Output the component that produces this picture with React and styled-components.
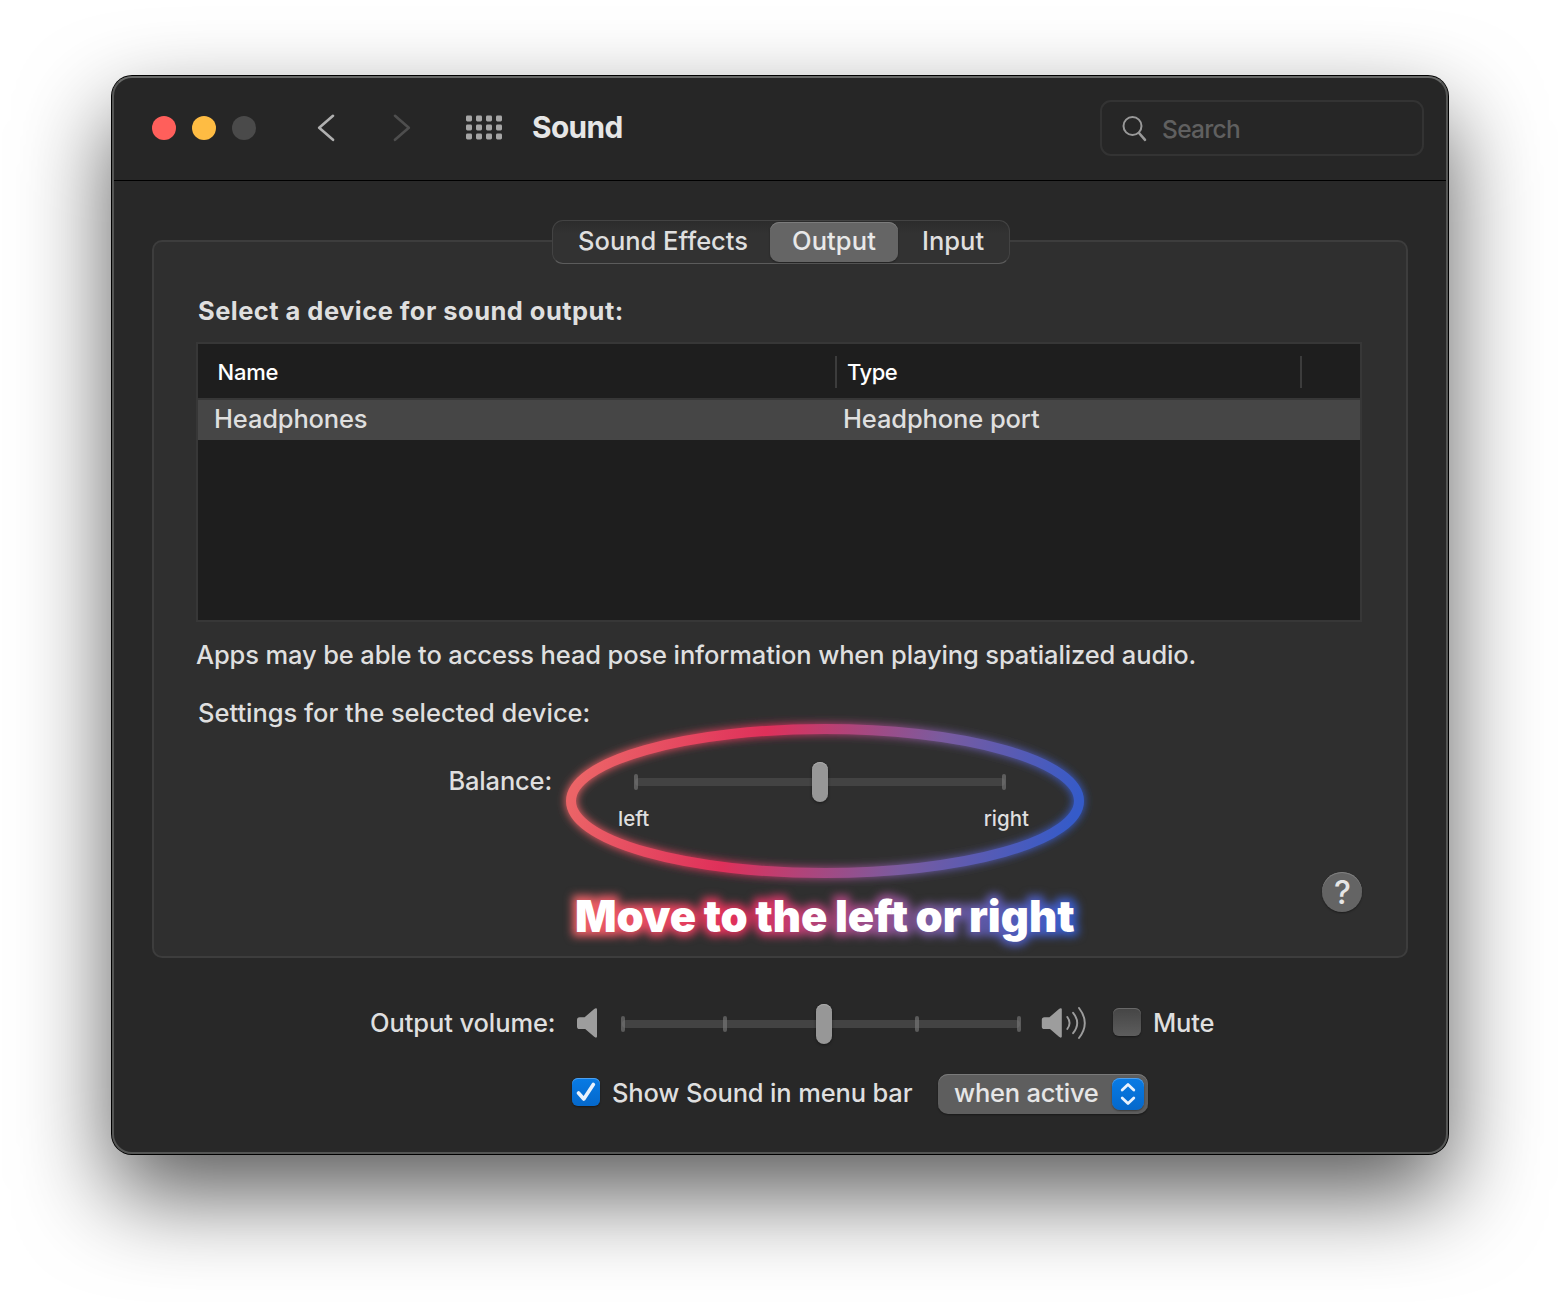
import React from "react";
import styled, { createGlobalStyle, css } from "styled-components";

const Global = createGlobalStyle`
  html, body { margin: 0; padding: 0; background: #fff; }
  body { overflow: hidden; font-family: Inter, "Liberation Sans", sans-serif; -webkit-font-smoothing: antialiased; }
  *, *::before, *::after { box-sizing: border-box; }
`;

const Desktop = styled.div`
  width: 1560px;
  height: 1302px;
  padding: 76px 112px 0;
  background: #fff;
  overflow: hidden;
`;

const Window = styled.main`
  position: relative;
  display: flex;
  flex-direction: column;
  width: 1336px;
  height: 1078px;
  border-radius: 20px;
  background: #282828;
  box-shadow: 0 0 0 1px #000, 0 40px 92px rgba(0, 0, 0, 0.65);
  &::after {
    content: "";
    position: absolute;
    inset: 0;
    border-radius: 20px;
    border: 2px solid #555655;
    border-top-color: #686968;
    pointer-events: none;
  }
`;

const Toolbar = styled.header`
  display: flex;
  align-items: center;
  height: 105px;
  padding: 0 24px 0 40px;
  background: #262626;
  border-bottom: 1px solid #000;
  border-radius: 20px 20px 0 0;
`;

const Lights = styled.div`
  display: flex;
  gap: 16px;
  width: 104px;
`;

const Light = styled.i`
  width: 24px;
  height: 24px;
  border-radius: 50%;
  background: ${(p) => p.$color};
`;

const Nav = styled.nav`
  display: flex;
  align-items: center;
  width: 276px;
  padding-left: 60px;
  svg { display: block; }
  svg + svg { margin-left: 56px; }
  svg + svg + svg { margin-left: 54px; }
`;

const Text = styled.span`
  display: block;
  flex: none;
  white-space: nowrap;
  font-size: ${(p) => p.$size || 25.5}px;
  font-weight: ${(p) => p.$weight || 450};
  letter-spacing: ${(p) => p.$track || 0}px;
  line-height: ${(p) => p.$line || 30}px;
  color: ${(p) => p.$color || "#dfdfdf"};
`;

const Title = styled.h1`
  margin: 0 0 2px;
  font-size: 29.8px;
  line-height: 36px;
  font-weight: 650;
  letter-spacing: -0.6px;
  color: #e6e6e6;
`;

const Search = styled.div`
  display: flex;
  align-items: center;
  width: 324px;
  height: 56px;
  margin-left: auto;
  padding-left: 20px;
  gap: 14px;
  border: 2px solid #333;
  border-radius: 11px;
`;

const SearchHint = styled.div`
  padding-top: 2px;
`;

const Body = styled.section`
  display: flex;
  flex-direction: column;
  padding: 39px 40px 0;
`;

const Tabs = styled.div`
  position: relative;
  z-index: 1;
  display: flex;
  align-self: center;
  width: 458px;
  height: 44px;
  margin: 0 0 -24px 2px;
  padding: 1px;
  border: 1px solid #434343;
  border-bottom-color: #5c5c5c;
  border-radius: 11px;
  background: linear-gradient(#2c2c2c, #323232 30%);
`;

const Tab = styled.div`
  width: ${(p) => p.$width}px;
  height: 40px;
  padding: 4px 0 0 ${(p) => p.$pad}px;
  border-radius: 9px;
  ${(p) => p.$active && css`
    background: #656565;
    box-shadow: inset 0 1px 0 #7c7c7c, 0 1px 2px rgba(0, 0, 0, 0.35);
  `}
`;

const Panel = styled.div`
  position: relative;
  height: 718px;
  padding: 54px 42px 0;
  border: 2px solid #3d3d3d;
  border-radius: 10px;
  background: #2f2f2f;
`;

const Indent = styled.div`
  padding-left: 2px;
  margin-top: ${(p) => p.$gap || 0}px;
`;

const Table = styled.div`
  width: 1166px;
  height: 280px;
  margin: 16px 0 18px;
  border: 2px solid #373737;
  background: #1e1e1e;
`;

const HeadRow = styled.div`
  display: flex;
  align-items: center;
  height: 56px;
  border-bottom: 2px solid #373737;
`;

const HeadCell = styled.div`
  width: ${(p) => p.$width}px;
  height: 32px;
  margin-top: 2px;
  padding: 3px 0 0 ${(p) => p.$pad}px;
  border-right: 2px solid #3c3c3c;
`;

const Row = styled.div`
  display: flex;
  height: 40px;
  padding: 4px 0 0 16px;
  background: #464646;
`;

const Cell = styled.div`
  width: ${(p) => p.$width}px;
`;

const BalanceRow = styled.div`
  display: flex;
  align-items: flex-start;
  margin-top: 34px;
  padding-left: 252px;
`;

const BalanceLabel = styled.div`
  width: 186px;
  padding: 4px 0 0 0.5px;
`;

const BalanceLabels = styled.div`
  display: flex;
  justify-content: space-between;
  width: 411px;
  margin: 5px 0 0 -16px;
`;

const Slider = styled.div`
  position: relative;
  width: ${(p) => p.$width}px;
  height: 40px;
  display: flex;
  align-items: center;
  &::before {
    content: "";
    position: absolute;
    left: 1px;
    right: 1px;
    top: 16px;
    height: 8px;
    border-radius: 4px;
    background: #434343;
  }
`;

const Tick = styled.i`
  position: relative;
  width: 4px;
  height: 16px;
  margin-left: ${(p) => p.$gap || 0}px;
  border-radius: 2px;
  background: rgba(125, 125, 125, 0.6);
`;

const Thumb = styled.i`
  position: absolute;
  left: ${(p) => p.$at}px;
  top: 0;
  width: 16px;
  height: 40px;
  border-radius: 8px;
  background: #979797;
  box-shadow: inset 0 1px 0 #aaa, 0 1px 3px rgba(0, 0, 0, 0.45);
`;

const Help = styled.button`
  position: absolute;
  right: 44px;
  bottom: 44px;
  width: 40px;
  height: 40px;
  padding: 1px 0 0 1px;
  border: 0;
  border-radius: 50%;
  background: #646464;
  box-shadow: inset 0 1px 0 #808080, 0 1px 2px rgba(0, 0, 0, 0.4);
  font: 450 32px/40px Inter, sans-serif;
  color: #e6e6e6;
`;

const Ring = styled.svg`
  position: absolute;
  left: 392px;
  top: 462px;
  overflow: visible;
`;

const Caption = styled.div`
  position: absolute;
  left: 421px;
  top: 648px;
  white-space: nowrap;
  font-size: 43.5px;
  line-height: 52px;
  font-weight: 900;
  word-spacing: -1.2px;
  color: #fff;
  &::before {
    content: attr(data-glow);
    position: absolute;
    z-index: 0;
    inset: -12px;
    padding: 12px;
    color: transparent;
    background: linear-gradient(108deg, #ec6467 3%, #df305a 34%, #7a5b9f 69%, #355bc9 96%);
    -webkit-background-clip: text;
    background-clip: text;
    -webkit-text-stroke: 9px transparent;
    filter: blur(4px);
  }
`;

const CaptionText = styled.span`
  position: relative;
`;

const VolumeRow = styled.div`
  display: flex;
  align-items: center;
  height: 46px;
  margin-top: 43px;
  padding-left: 218px;
  svg { display: block; flex: none; }
`;

const Label = styled.div`
  width: ${(p) => p.$width}px;
  margin-bottom: ${(p) => p.$lift || 0}px;
`;

const VolumeSlider = styled.div`
  margin: 0 20px 0 22px;
`;

const Check = styled.i`
  display: flex;
  align-items: center;
  justify-content: center;
  width: 28px;
  height: 28px;
  margin: 0 12px 4px ${(p) => p.$gap || 0}px;
  border-radius: 6px;
  background: ${(p) => (p.$on ? "linear-gradient(#087be5, #0568cb)" : "linear-gradient(#454545, #5d5d5d)")};
  box-shadow: inset 0 1px 0 ${(p) => (p.$on ? "#4fa0ee" : "#686868")}, 0 1px 2px rgba(0, 0, 0, 0.4);
`;

const MenuRow = styled.div`
  display: flex;
  align-items: center;
  height: 40px;
  margin-top: 27px;
  padding-left: 420px;
`;

const Select = styled.div`
  display: flex;
  align-items: center;
  width: 210px;
  height: 40px;
  padding: 0 4px 0 16px;
  border-radius: 10px;
  background: #5e5e5e;
  box-shadow: inset 0 1px 0 #7a7a7a, 0 1px 2px rgba(0, 0, 0, 0.4);
`;

const Stepper = styled.i`
  display: flex;
  align-items: center;
  justify-content: center;
  width: 32px;
  height: 32px;
  border-radius: 8px;
  background: linear-gradient(#087be5, #0568cb);
  box-shadow: inset 0 1px 0 #4fa0ee, 0 1px 2px rgba(0, 0, 0, 0.4);
`;

const Speaker = ({ loud }) => (
  <svg width={loud ? 46 : 22} height="34" viewBox={loud ? "-0.800 0 46 34" : "0 0 22 34"} fill="none">
    <path d="M2.6 10.2H7.6L17.2 2C18.6.8 20 1 20 2.600V29.200C20 31 18.500 31 17.200 29.800L8.200 22H2.600Q0 22 0 19.400V12.800Q0 10.200 2.600 10.200Z" fill="#9d9d9d" />
    {loud && (
      <g stroke="#9d9d9d" strokeWidth="1.9" strokeLinecap="round">
        <path d="M25.500 10Q30 16 25.500 22" />
        <path d="M31.300 5.800Q39.500 16 31.300 26.200" />
        <path d="M37.200 1Q48.800 16 37.200 31" />
      </g>
    )}
  </svg>
);

export default function App() {
  return (
    <>
      <Global />
      <Desktop>
        <Window>
          <Toolbar>
            <Lights>
              <Light $color="#ff5f5b" />
              <Light $color="#febc43" />
              <Light $color="#4a4a4a" />
            </Lights>
            <Nav>
              <svg width="20" height="28" fill="none" stroke="#b0b0b0" strokeWidth="2.6" strokeLinecap="round" strokeLinejoin="round"><path d="M17 1.800L3.200 13.800L17 25.800" /></svg>
              <svg width="20" height="28" fill="none" stroke="#4e4e4e" strokeWidth="2.6" strokeLinecap="round" strokeLinejoin="round"><path d="M3 1.800L16.800 13.800L3 25.800" /></svg>
              <svg width="36" height="26" fill="#a6a6a6">
                {[0, 9, 18].map((y) => [0, 10, 20, 30].map((x) => <rect key={`${x}-${y}`} x={x} y={y + 0.5} width="6" height="6" rx="1.400" />))}
              </svg>
            </Nav>
            <Title>Sound</Title>
            <Search>
              <svg width="26" height="28" fill="none" stroke="#999" strokeWidth="2" strokeLinecap="round"><circle cx="10.500" cy="12" r="9" /><path d="M17 19L23 25.800" strokeWidth="2.600" /></svg>
              <SearchHint><Text $size={24.500} $track={-0.7} $weight={450} $color="#606060">Search</Text></SearchHint>
            </Search>
          </Toolbar>
          <Body>
            <Tabs>
              <Tab $width={216} $pad={24}><Text>Sound Effects</Text></Tab>
              <Tab $width={128} $pad={22} $active><Text $track={0.1} $color="#e8e8e8">Output</Text></Tab>
              <Tab $width={110} $pad={24}><Text>Input</Text></Tab>
            </Tabs>
            <Panel>
              <Indent><Text $weight={730} $track={0.46}>Select a device for sound output:</Text></Indent>
              <Table>
                <HeadRow>
                  <HeadCell $width={639} $pad={19.500}><Text $size={22} $weight={500} $line={26} $track={-0.2} $color="#fff">Name</Text></HeadCell>
                  <HeadCell $width={465} $pad={10}><Text $size={22} $weight={500} $line={26} $track={-0.5} $color="#fff">Type</Text></HeadCell>
                </HeadRow>
                <Row>
                  <Cell $width={629}><Text $track={-0.16}>Headphones</Text></Cell>
                  <Cell><Text $track={-0.12}>Headphone port</Text></Cell>
                </Row>
              </Table>
              <Text $track={-0.13}>Apps may be able to access head pose information when playing spatialized audio.</Text>
              <Indent $gap={28}><Text $track={-0.01}>Settings for the selected device:</Text></Indent>
              <BalanceRow>
                <BalanceLabel><Text $track={-0.18}>Balance:</Text></BalanceLabel>
                <div>
                  <Slider $width={372}><Tick /><Tick $gap={364} /><Thumb $at={178} /></Slider>
                  <BalanceLabels>
                    <Text $size={20.500} $line={24}>left</Text>
                    <Text $size={20.500} $line={24}>right</Text>
                  </BalanceLabels>
                </div>
              </BalanceRow>
              <Ring width="558" height="194" viewBox="546 704 558 194" fill="none">
                <defs>
                  <linearGradient id="ring" gradientUnits="userSpaceOnUse" x1="595" y1="726" x2="1055" y2="876">
                    <stop offset="0" stopColor="#ec6467" />
                    <stop offset=".34" stopColor="#df305a" />
                    <stop offset=".69" stopColor="#7a5b9f" />
                    <stop offset="1" stopColor="#355bc9" />
                  </linearGradient>
                  <filter id="glow" x="-10%" y="-20%" width="120%" height="140%"><feGaussianBlur stdDeviation="4" /></filter>
                </defs>
                <ellipse cx="825" cy="801" rx="254" ry="72" stroke="url(#ring)" strokeWidth="11" filter="url(#glow)" />
                <ellipse cx="825" cy="801" rx="254" ry="72" stroke="url(#ring)" strokeWidth="10" />
              </Ring>
              <Caption data-glow="Move to the left or right"><CaptionText>Move to the left or right</CaptionText></Caption>
              <Help>?</Help>
            </Panel>
            <VolumeRow>
              <Label $width={207} $lift={2}><Text $track={-0.1}>Output volume:</Text></Label>
              <Speaker />
              <VolumeSlider>
                <Slider $width={400}><Tick /><Tick $gap={98} /><Tick $gap={188} /><Tick $gap={98} /><Thumb $at={195} /></Slider>
              </VolumeSlider>
              <Speaker loud />
              <Check $gap={26} />
              <Label $lift={2}><Text $track={-0.2}>Mute</Text></Label>
            </VolumeRow>
            <MenuRow>
              <Check $on><svg width="20" height="20" fill="none" stroke="#e8f2fd" strokeWidth="3.600" strokeLinecap="round" strokeLinejoin="round"><path d="M2.500 11L7.800 17L17.300 2.500" /></svg></Check>
              <Label $width={326} $lift={2}><Text $track={-0.16}>Show Sound in menu bar</Text></Label>
              <Select>
                <Label $width={158} $lift={2}><Text $track={-0.22} $color="#e6e6e6">when active</Text></Label>
                <Stepper><svg width="16" height="24" fill="none" stroke="#e8f2fd" strokeWidth="2.800" strokeLinecap="round" strokeLinejoin="round"><path d="M2.200 8L8 2.500L13.800 8M2.200 16L8 21.500L13.800 16" /></svg></Stepper>
              </Select>
            </MenuRow>
          </Body>
        </Window>
      </Desktop>
    </>
  );
}
